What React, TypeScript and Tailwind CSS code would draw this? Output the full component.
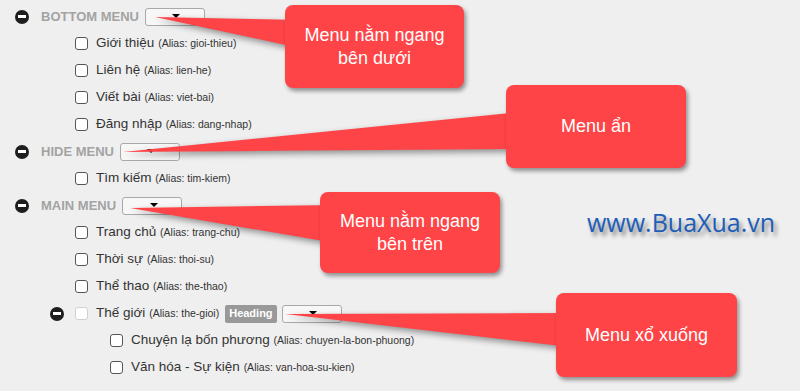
import React from "react";

// One row of the menu tree
interface Item {
  label: string;
  alias: string;
  level: 1 | 2;
  heading?: boolean;
  parent?: boolean;
  disabled?: boolean;
}

interface Group {
  title: string;
  items: Item[];
}

const groups: Group[] = [
  {
    title: "BOTTOM MENU",
    items: [
      { label: "Giới thiệu", alias: "gioi-thieu", level: 1 },
      { label: "Liên hệ", alias: "lien-he", level: 1 },
      { label: "Viết bài", alias: "viet-bai", level: 1 },
      { label: "Đăng nhập", alias: "dang-nhap", level: 1 },
    ],
  },
  {
    title: "HIDE MENU",
    items: [{ label: "Tìm kiếm", alias: "tim-kiem", level: 1 }],
  },
  {
    title: "MAIN MENU",
    items: [
      { label: "Trang chủ", alias: "trang-chu", level: 1 },
      { label: "Thời sự", alias: "thoi-su", level: 1 },
      { label: "Thể thao", alias: "the-thao", level: 1 },
      {
        label: "Thế giới",
        alias: "the-gioi",
        level: 1,
        heading: true,
        parent: true,
        disabled: true,
      },
      { label: "Chuyện lạ bốn phương", alias: "chuyen-la-bon-phuong", level: 2 },
      { label: "Văn hóa - Sự kiện", alias: "van-hoa-su-kien", level: 2 },
    ],
  },
];

const MinusIcon = () => (
  <span className="flex items-center justify-center w-[14px] h-[14px] rounded-full bg-[#1e1e1e] shrink-0">
    <span className="block w-[8px] h-[3px] bg-white" />
  </span>
);

const Select = () => (
  <span className="flex items-center justify-center w-[60px] h-[18px] border border-[#a9a9a9] rounded-[3px] bg-[#f7f7f7] shrink-0">
    <span className="block w-0 h-0 border-l-[4px] border-r-[4px] border-t-[4px] border-l-transparent border-r-transparent border-t-black ml-[3px] -mt-[2px]" />
  </span>
);

const Checkbox = ({ disabled }: { disabled?: boolean }) => (
  <span
    className={`block w-[13px] h-[13px] rounded-[3px] border bg-white shrink-0 ${
      disabled ? "border-[#d0d0d0]" : "border-[#555]"
    }`}
  />
);

const Row = ({ item }: { item: Item }) => (
  <div
    className={`h-[27px] flex items-center ${
      item.level === 2 ? "pl-[110px]" : item.parent ? "pl-[50px]" : "pl-[75px]"
    }`}
  >
    {item.parent && (
      <span className="mr-[11px]">
        <MinusIcon />
      </span>
    )}
    <Checkbox disabled={item.disabled} />
    <span className="ml-[8px] text-[13.5px] text-[#333] whitespace-nowrap">
      {item.label}{" "}
      <span className="text-[10.5px]">(Alias: {item.alias})</span>
    </span>
    {item.heading && (
      <>
        <span className="ml-[6px] h-[18px] px-[4px] flex items-center rounded-[2px] bg-[#999] text-white text-[11px] font-bold">
          Heading
        </span>
        <span className="ml-[5px]">
          <Select />
        </span>
      </>
    )}
  </div>
);

// Red annotation bubble
const Callout = ({
  className,
  lines,
}: {
  className: string;
  lines: string[];
}) => (
  <div
    className={`absolute flex flex-col items-center justify-center rounded-[8px] bg-[#fe4447] text-white text-[18px] leading-[23px] shadow-[2px_3px_4px_rgba(0,0,0,0.4)] ${className}`}
  >
    {lines.map((l) => (
      <span key={l}>{l}</span>
    ))}
  </div>
);

const App = () => {
  return (
    <div
      className="relative w-[800px] h-[391px] overflow-hidden bg-[#efefef]"
      style={{ fontFamily: '"Liberation Sans", Arial, sans-serif' }}
    >
      {/* TREE */}
      <div className="pt-[3px]">
        {groups.map((g) => (
          <div key={g.title}>
            <div className="h-[27px] flex items-center pl-[15px]">
              <MinusIcon />
              <span className="ml-[12px] text-[13px] font-bold text-[#a3a3a3]">
                {g.title}
              </span>
              <span className="ml-[6px]">
                <Select />
              </span>
            </div>
            {g.items.map((it) => (
              <Row key={it.alias} item={it} />
            ))}
          </div>
        ))}
      </div>

      {/* LOGO */}
      <div
        className="absolute left-[587px] top-[205px] text-[25px] leading-[34px] text-[#1d5eb8] [text-shadow:3px_4px_4px_rgba(0,0,0,0.45)]"
        style={{ fontFamily: '"Open Sans", sans-serif' }}
      >
        www.BuaXua.vn
      </div>

      {/* CALLOUT TAILS */}
      <svg
        className="absolute inset-0"
        width="800"
        height="391"
        style={{ filter: "drop-shadow(2px 3px 3px rgba(0,0,0,0.4))" }}
      >
        <polygon points="155,17 300,20 300,48" fill="#fe4447" />
        <polygon points="123,152 520,112 520,149" fill="#fe4447" />
        <polygon points="130,208 335,205 335,243" fill="#fe4447" />
        <polygon points="285,314 570,313 570,347" fill="#fe4447" />
      </svg>

      <Callout
        className="left-[285px] top-[5px] w-[179px] h-[83px]"
        lines={["Menu nằm ngang", "bên dưới"]}
      />
      <Callout
        className="left-[506px] top-[85px] w-[180px] h-[83px]"
        lines={["Menu ẩn"]}
      />
      <Callout
        className="left-[320px] top-[192px] w-[180px] h-[81px]"
        lines={["Menu nằm ngang", "bên trên"]}
      />
      <Callout
        className="left-[556px] top-[293px] w-[181px] h-[84px]"
        lines={["Menu xổ xuống"]}
      />
    </div>
  );
};

export default App;
